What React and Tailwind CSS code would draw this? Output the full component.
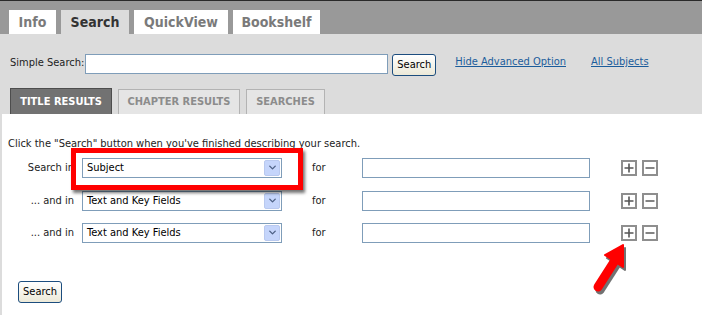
import { ChevronDown } from "lucide-react";

const font = { fontFamily: '"DejaVu Sans Condensed", "DejaVu Sans", Tahoma, sans-serif' };

function TopTab({ label, active, width }) {
  return (
    <div
      className={`flex h-[24px] items-center justify-center text-[14px] font-bold ${
        active ? "bg-[#dcdcdc] text-[#333]" : "bg-white text-[#7a7a7a]"
      } ${width}`}
    >
      {label}
    </div>
  );
}

function SubTab({ label, active, width }) {
  return (
    <div
      className={`flex items-center justify-center text-[11px] font-bold ${
        active
          ? "h-[26px] border border-b-0 border-[#4d4d4d] bg-[#727272] text-white"
          : "h-[25px] border border-b-0 border-[#b3b3b3] bg-[#e5e5e5] text-[#8c8c8c]"
      } ${width}`}
    >
      {label}
    </div>
  );
}

function XpButton({ children }) {
  return (
    <button className="h-[22px] rounded-[3px] border border-[#1c4d7e] bg-gradient-to-b from-white to-[#ece9d8] px-[4px] text-[11px] text-black">
      {children}
    </button>
  );
}

function FakeSelect({ value }) {
  return (
    <div className="flex h-[20px] w-[200px] items-center justify-between border border-[#7f9db9] bg-white pl-[4px] pr-[1px]">
      <span className="text-[11px] text-black">{value}</span>
      <div className="flex h-[16px] w-[16px] items-center justify-center rounded-[2px] border border-[#b9c9ef] bg-[#c5d5fb]">
        <ChevronDown size={11} strokeWidth={3} className="text-[#4d6185]" />
      </div>
    </div>
  );
}

function PlusMinus() {
  return (
    <div className="ml-[31px] flex gap-[5px]">
      <svg width="16" height="16" viewBox="0 0 16 16">
        <rect x="1" y="1" width="14" height="14" fill="white" stroke="#8e8e8e" strokeWidth="2" />
        <path d="M8 3.5v9M3.5 8h9" stroke="#555" strokeWidth="1.6" />
      </svg>
      <svg width="16" height="16" viewBox="0 0 16 16">
        <rect x="1" y="1" width="14" height="14" fill="white" stroke="#8e8e8e" strokeWidth="2" />
        <path d="M3.5 8h9" stroke="#666" strokeWidth="1.6" />
      </svg>
    </div>
  );
}

function Row({ label, value, className }) {
  return (
    <div className={`flex items-center ${className}`}>
      <div className="w-[66px] text-right text-[11px] text-[#222]">{label}</div>
      <div className="ml-[8px]">
        <FakeSelect value={value} />
      </div>
      <div className="ml-[30px] w-[50px] text-[11px] text-[#222]">for</div>
      <input className="h-[20px] w-[228px] border border-[#7f9db9] bg-white outline-none" />
      <PlusMinus />
    </div>
  );
}

export default function App() {
  return (
    <div className="relative h-[315px] w-[702px] overflow-hidden bg-[#dcdcdc]" style={font}>
      {/* top tabs */}
      <div className="border-t border-[#2a2a2a] bg-[#999999] pt-[9px] pl-[9px]">
        <div className="flex gap-[5px]">
          <TopTab label="Info" width="w-[47px]" />
          <TopTab label="Search" active width="w-[68px]" />
          <TopTab label="QuickView" width="w-[94px]" />
          <TopTab label="Bookshelf" width="w-[87px]" />
        </div>
      </div>

      {/* simple search */}
      <div className="flex items-center pt-[17px] pl-[10px]">
        <span className="text-[11px] text-[#222]">Simple Search:</span>
        <input className="ml-[1px] h-[20px] w-[303px] border border-[#7f9db9] bg-white outline-none" />
        <div className="ml-[4px]">
          <XpButton>Search</XpButton>
        </div>
        <a className="ml-[19px] -mt-[3px] text-[11px] text-[#1b5c9b] underline">Hide Advanced Option</a>
        <a className="ml-[25px] -mt-[3px] text-[11px] text-[#1b5c9b] underline">All Subjects</a>
      </div>

      {/* sub tabs */}
      <div className="mt-[12px] flex items-end gap-[6px] pl-[10px]">
        <SubTab label="TITLE RESULTS" active width="w-[102px]" />
        <SubTab label="CHAPTER RESULTS" width="w-[122px]" />
        <SubTab label="SEARCHES" width="w-[79px]" />
      </div>

      {/* content */}
      <div className="ml-[2px] h-[210px] bg-white pt-[22px] pl-[6px]">
        <p className="text-[11px] text-[#222]">
          Click the "Search" button when you've finished describing your search.
        </p>
        <Row label="Search in" value="Subject" className="mt-[5px]" />
        <Row label="... and in" value="Text and Key Fields" className="mt-[13px]" />
        <Row label="... and in" value="Text and Key Fields" className="mt-[12px]" />
        <div className="mt-[35px] ml-[10px]">
          <XpButton>Search</XpButton>
        </div>
      </div>

      {/* annotation: red box */}
      <div className="absolute left-[71px] top-[148px] h-[42px] w-[232px] border-[5px] border-[#ff0000] shadow-[2px_3px_3px_rgba(0,0,0,0.55)]" />

      {/* annotation: red arrow */}
      <svg className="absolute left-[585px] top-[240px]" width="55" height="60" viewBox="0 0 55 60">
        <g transform="translate(2,3)" opacity="0.55">
          <path d="M13 47 L29 22" stroke="#000" strokeWidth="9" strokeLinecap="round" />
          <path d="M38 5 L20 15 L38 27 Z" fill="#000" stroke="#000" strokeWidth="2" strokeLinejoin="round" />
        </g>
        <path d="M13 47 L29 22" stroke="#ff0000" strokeWidth="9" strokeLinecap="round" />
        <path d="M38 5 L20 15 L38 27 Z" fill="#ff0000" stroke="#ff0000" strokeWidth="2" strokeLinejoin="round" />
      </svg>
    </div>
  );
}
